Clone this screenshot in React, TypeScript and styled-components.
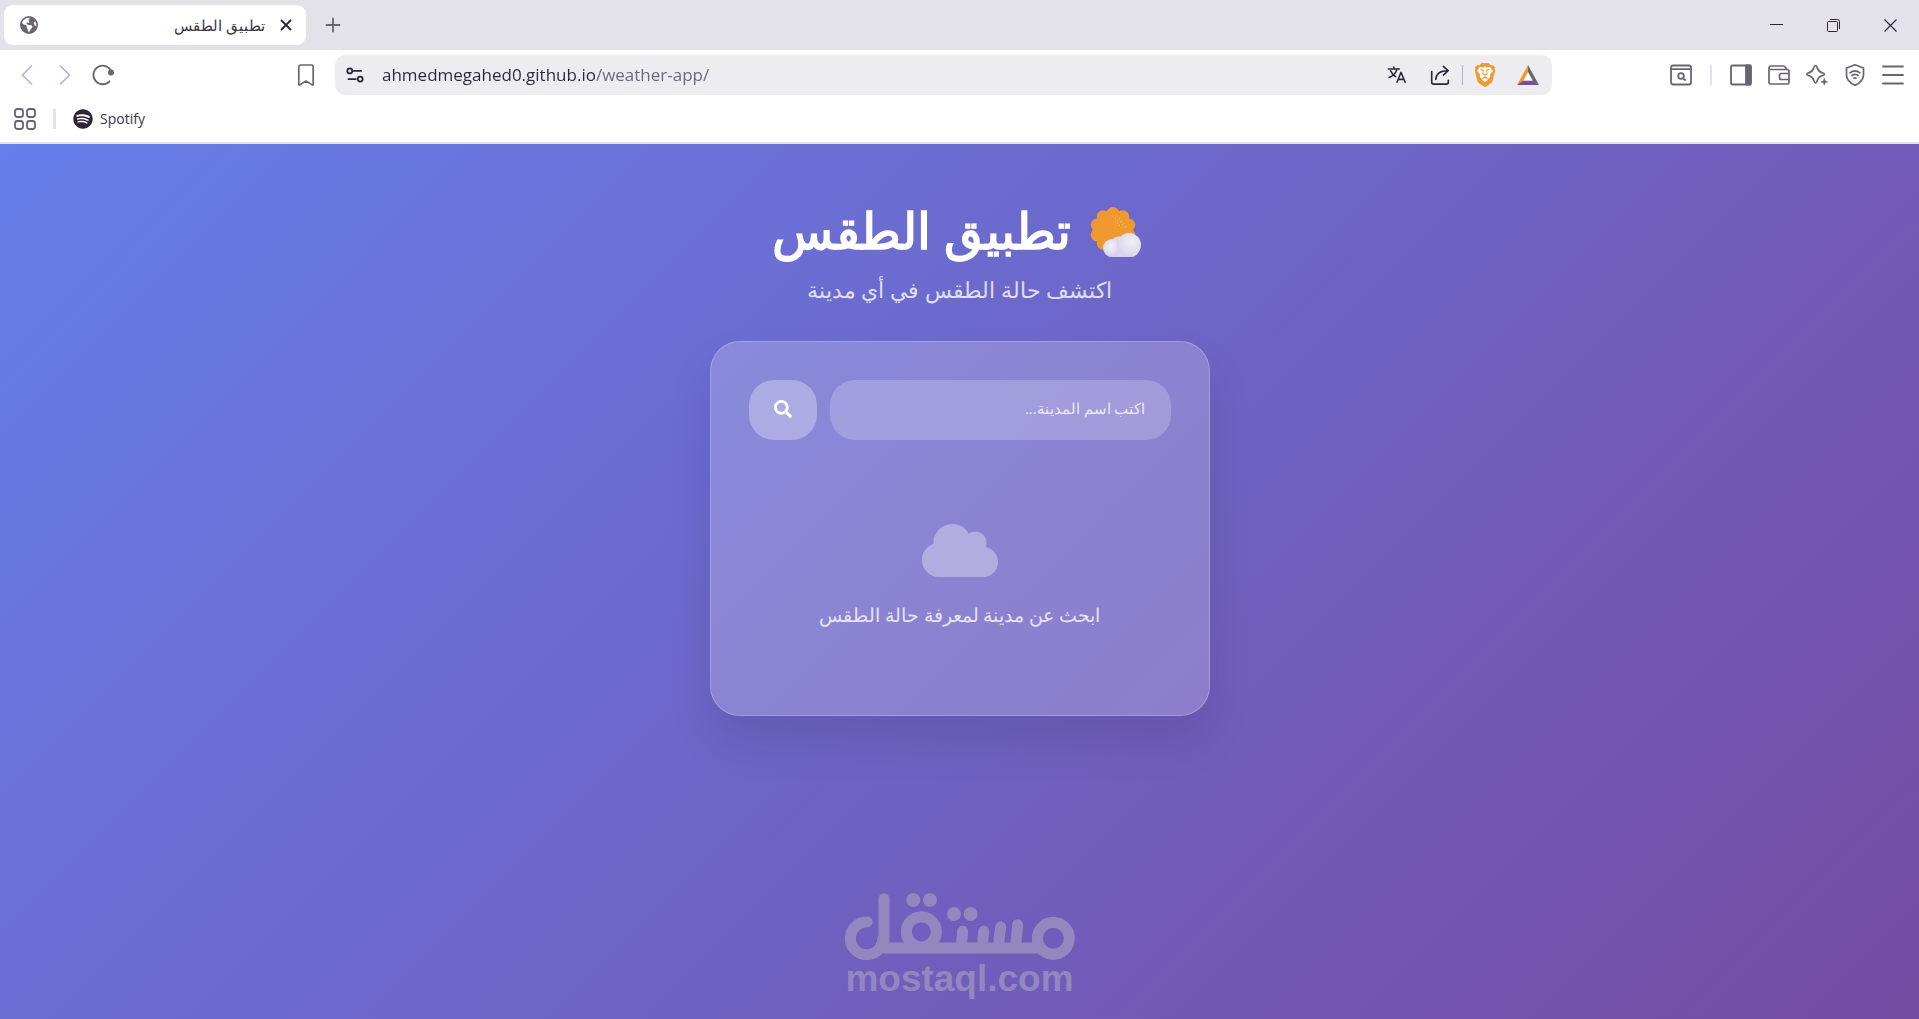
import React from 'react';
import styled, { createGlobalStyle } from 'styled-components';
import { FaCloud, FaSpotify, FaEarthAmericas } from 'react-icons/fa6';
import { FaSearch } from 'react-icons/fa';
import { SiBrave } from 'react-icons/si';

const GlobalStyle = createGlobalStyle`
  *, *::before, *::after { box-sizing: border-box; }
  body { margin: 0; font-family: 'Open Sans', sans-serif; background: #fff; }
  button, input { font-family: inherit; border: 0; outline: 0; }
  svg { display: block; flex: none; }
`;

const Window = styled.div`
  display: flex;
  flex-direction: column;
  min-height: 100vh;
`;

const TabStrip = styled.header`
  display: flex;
  align-items: center;
  height: 50px;
  padding-left: 4px;
  background: #e3e2e8;
  color: #2d2638;
`;

const Tab = styled.div`
  display: flex;
  align-items: center;
  width: 302px;
  height: 40px;
  padding: 0 8px 0 16px;
  border-radius: 9px;
  background: #fff;
  color: #6a6471;
`;

const TabTitle = styled.span`
  flex: 1;
  padding-right: 9px;
  font-size: 15px;
  line-height: 20px;
  color: #3b3644;
`;

const IconButton = styled.button<{ $w?: number; $color?: string }>`
  display: flex;
  align-items: center;
  justify-content: center;
  flex: none;
  width: ${p => p.$w ?? 38}px;
  height: 36px;
  padding: 0;
  background: none;
  color: ${p => p.$color ?? '#6a6471'};
`;

const NewTabSlot = styled.div`
  flex: 1;
  padding-left: 8px;
`;

const Toolbar = styled.div`
  display: grid;
  grid-template-columns: 335px minmax(0, 1fr) 367px;
  align-items: center;
  height: 50px;
`;

const ToolGroup = styled.div<{ $end?: boolean }>`
  display: flex;
  align-items: center;
  padding: ${p => (p.$end ? '0 7px' : '0 10px 0 8px')};
  justify-content: ${p => (p.$end ? 'flex-end' : 'flex-start')};
`;

const Spring = styled.span`
  flex: 1;
`;

const AddressBar = styled.form`
  display: flex;
  align-items: center;
  gap: 1px;
  height: 40px;
  padding-right: 3px;
  border-radius: 10px;
  background: #edecf1;
`;

const AddressInput = styled.input`
  flex: 1;
  min-width: 0;
  height: 30px;
  padding: 0 0 2px 6px;
  font-size: 17px;
  color: transparent;
  background: linear-gradient(90deg, #2d2638 219px, #6a6480 219px);
  background-clip: text;
  -webkit-background-clip: text;
`;

const Divider = styled.span<{ $w: number; $gap?: number; $color?: string }>`
  flex: none;
  width: ${p => p.$w}px;
  height: 20px;
  margin: 0 ${p => p.$gap ?? 0}px;
  background: ${p => p.$color ?? '#e3e2e8'};
`;

const BookmarksBar = styled.nav`
  display: flex;
  align-items: center;
  height: 44px;
  padding: 0 6px 4px;
  border-bottom: 2px solid #e3e2e8;
`;

const BookmarkLink = styled.a`
  display: flex;
  align-items: center;
  gap: 7px;
  padding-left: 8px;
  font-size: 14px;
  line-height: 20px;
  color: #3b3644;
  text-decoration: none;
`;

const Page = styled.main`
  display: flex;
  flex-direction: column;
  align-items: center;
  flex: 1;
  padding: 56px 16px 21px;
  background: linear-gradient(135deg, #667eea 0%, #764ba2 100%);
  color: #fff;
`;

const Title = styled.h1`
  display: flex;
  align-items: center;
  gap: 18px;
  margin: 0;
  font-size: 50px;
  line-height: 60px;
  font-weight: 700;
`;

const Subtitle = styled.p`
  margin: 14px 0 37px;
  font-size: 22px;
  line-height: 30px;
  color: rgba(255, 255, 255, 0.8);
`;

const Card = styled.section`
  width: 100%;
  max-width: 500px;
  padding: 38px;
  border: 1px solid rgba(255, 255, 255, 0.22);
  border-radius: 30px;
  background: rgba(255, 255, 255, 0.2);
  box-shadow: 0 25px 45px rgba(0, 0, 0, 0.1);
`;

const SearchForm = styled.form`
  display: flex;
  gap: 13px;
  height: 60px;
`;

const CityInput = styled.input`
  flex: 1;
  min-width: 0;
  padding: 0 25px 4px;
  border-radius: 25px;
  background: rgba(255, 255, 255, 0.2);
  color: #fff;
  font-size: 15px;
  &::placeholder { color: rgba(255, 255, 255, 0.8); opacity: 1; }
`;

const SearchButton = styled.button`
  display: flex;
  align-items: center;
  justify-content: center;
  width: 68px;
  padding: 0 0 2px;
  border-radius: 25px;
  background: rgba(255, 255, 255, 0.3);
  color: #fff;
`;

const EmptyState = styled.div`
  display: flex;
  flex-direction: column;
  align-items: center;
  gap: 21px;
  padding: 80px 0 49px;
  font-size: 19px;
  line-height: 26px;
  color: rgba(255, 255, 255, 0.8);
  p { margin: 0; }
`;

const CloudIcon = styled(FaCloud)`
  width: 76px;
  height: 61px;
  color: rgba(255, 255, 255, 0.34);
`;

const Brand = styled.footer`
  display: flex;
  flex-direction: column;
  align-items: center;
  margin-top: auto;
  color: #9387bf;
  font: 700 37px/38px 'Liberation Sans', sans-serif;
`;

const Stroke = ({ size = 22, w = 1.6, children }: { size?: number; w?: number; children: React.ReactNode }) => (
  <svg width={size} height={size} viewBox="0 0 22 22" fill="none" stroke="currentColor" strokeWidth={w}
    strokeLinecap="round" strokeLinejoin="round" aria-hidden="true">{children}</svg>
);

const SunCloud = () => {
  const petals = Array.from({ length: 10 }, (_, i) => {
    const a = (i / 10) * Math.PI * 2 - Math.PI / 2;
    return <circle key={i} cx={26 + 16.5 * Math.cos(a)} cy={27 + 16.5 * Math.sin(a)} r="6.5" />;
  });
  return (
    <svg width="58" height="56" viewBox="2 -1 58 56" aria-hidden="true">
      <defs>
        <radialGradient id="puffA" cx="0.45" cy="0.4" r="0.65">
          <stop offset="0" stopColor="#f3f2f5" /><stop offset="1" stopColor="#cfcdea" />
        </radialGradient>
        <radialGradient id="puffB" cx="0.62" cy="0.35" r="0.75">
          <stop offset="0" stopColor="#f1f0f4" /><stop offset="1" stopColor="#d3d0ea" />
        </radialGradient>
      </defs>
      <g fill="#ee9a30">{petals}<circle cx="26" cy="27" r="19" /></g>
      <g fill="#f3c078">
        {[0, 1, 2, 3, 4, 5].map(i => <circle key={i} cx={26 + i * 2.4} cy={13 + i * 2.2} r="0.6" />)}
        {[0, 1, 2, 3, 4].map(i => <circle key={i} cx={30 + i * 2.3} cy={13 + i * 2.6} r="0.6" />)}
        {[0, 1, 2, 3].map(i => <circle key={i} cx={28 + i * 2.3} cy={18 + i * 2.2} r="0.6" />)}
      </g>
      <rect x="17" y="38" width="35" height="16" rx="8" fill="#d6d3ec" />
      <circle cx="32" cy="43" r="9.5" fill="#dcd9ec" />
      <circle cx="25" cy="45" r="9" fill="url(#puffA)" />
      <circle cx="42" cy="42" r="12" fill="url(#puffB)" />
    </svg>
  );
};

const BrandMark = () => (
  <svg width="230" height="67" viewBox="72 70 690 201" fill="none" stroke="currentColor" strokeWidth="33"
    strokeLinecap="round" role="img" aria-label="مستقل">
    <circle cx="697" cy="206" r="48" />
    <line x1="165" y1="235" x2="670" y2="235" strokeLinecap="butt" />
    <line x1="590" y1="165" x2="584" y2="228" />
    <line x1="539" y1="172" x2="532" y2="228" />
    <line x1="488" y1="185" x2="484" y2="228" />
    <line x1="425" y1="185" x2="421" y2="228" />
    <circle cx="301" cy="186" r="45" />
    <line x1="189" y1="87" x2="189" y2="210" />
    <circle cx="137" cy="206" r="49" strokeDasharray="231 77" />
    <g fill="currentColor" stroke="none">
      <circle cx="399" cy="133" r="21" /><circle cx="449" cy="133" r="21" />
      <circle cx="277" cy="91" r="21" /><circle cx="327" cy="91" r="21" />
    </g>
  </svg>
);

export default function App() {
  return (
    <Window>
      <GlobalStyle />
      <TabStrip>
        <Tab>
          <FaEarthAmericas size={18} />
          <TabTitle dir="rtl">تطبيق الطقس</TabTitle>
          <IconButton $w={24} $color="#2d2638" aria-label="Close tab">
            <Stroke w={1.9}><path d="M6.500 6.500l9 9M15.500 6.500l-9 9" /></Stroke>
          </IconButton>
        </Tab>
        <NewTabSlot>
          <IconButton aria-label="New tab"><Stroke w={1.8}><path d="M11 4.500v13M4.500 11h13" /></Stroke></IconButton>
        </NewTabSlot>
        <IconButton $w={57} $color="#2d2638" aria-label="Minimize">
          <svg width="13" height="13" viewBox="0 0 13 13" stroke="currentColor"><path d="M0 5.500h13" /></svg>
        </IconButton>
        <IconButton $w={57} $color="#2d2638" aria-label="Restore">
          <svg width="13" height="13" viewBox="0 0 13 13" fill="none" stroke="currentColor">
            <rect x="0.500" y="2.500" width="10" height="10" rx="1" /><path d="M3 .5h7.500a2 2 0 0 1 2 2V10" />
          </svg>
        </IconButton>
        <IconButton $w={57} $color="#2d2638" aria-label="Close window">
          <svg width="13" height="13" viewBox="0 0 13 13" stroke="currentColor" strokeWidth="1.200"><path d="M.5.5l12 12M12.500.5l-12 12" /></svg>
        </IconButton>
      </TabStrip>

      <Toolbar>
        <ToolGroup>
          <IconButton $color="#b3addb" aria-label="Back"><Stroke><path d="M15.500 2l-9 9 9 9" /></Stroke></IconButton>
          <IconButton $color="#b3addb" aria-label="Forward"><Stroke><path d="M6.500 2l9 9-9 9" /></Stroke></IconButton>
          <IconButton aria-label="Reload">
            <Stroke w={1.8}>
              <path d="M17.500 17.300A9.300 9.300 0 1 1 18.600 6" />
              <circle cx="19" cy="8.500" r="3" fill="currentColor" stroke="none" />
            </Stroke>
          </IconButton>
          <Spring />
          <IconButton aria-label="Bookmark this page">
            <Stroke w={1.7}><path d="M3.800 3a2 2 0 0 1 2-2h10.400a2 2 0 0 1 2 2v17.500c0 .6-.5.8-1 .4L11 17l-6.200 3.900c-.5.4-1 .2-1-.4z" /></Stroke>
          </IconButton>
        </ToolGroup>

        <AddressBar>
          <IconButton type="button" $w={40} $color="#2d2638" aria-label="Site settings">
            <Stroke size={18} w={2.2}>
              <circle cx="4.600" cy="6" r="3" /><path d="M9.500 6h9" />
              <circle cx="17.400" cy="16" r="3" /><path d="M3 16h9" />
            </Stroke>
          </IconButton>
          <AddressInput aria-label="Address" defaultValue="ahmedmegahed0.github.io/weather-app/" />
          <IconButton type="button" $w={42} $color="#2d2638" aria-label="Translate">
            <Stroke size={20} w={1.7}>
              <path d="M1.500 4.500h12M7.500 2.300v2M11 4.500c-1 4-4.500 7.500-8.800 9.300M4 6.500c1.200 2.800 3 4.800 5.500 6.300M11 19l4.400-11 4.600 11M12.500 15.800h6" />
            </Stroke>
          </IconButton>
          <IconButton type="button" $w={42} $color="#2d2638" aria-label="Share">
            <Stroke size={21} w={1.7}>
              <path d="M1.800 7v11a2 2 0 0 0 2 2h13.400a2 2 0 0 0 2-2v-2M6 15c.5-6 5-9 12.500-9M14 1.500L19 6l-5 4.500" />
            </Stroke>
          </IconButton>
          <Divider $w={1} $color="#b3addb" />
          <IconButton type="button" $w={42} $color="#ee9a30" aria-label="Brave Shields">
            <svg width="24" height="24" viewBox="0 0 24 24"><path d="M6 5h12v9l-6 6-6-6z" fill="#fff" /><SiBrave size={24} /></svg>
          </IconButton>
          <IconButton type="button" $w={42} aria-label="Brave Rewards">
            <svg width="22" height="20" viewBox="0 0 22 20">
              <path d="M11 0L0 20l7-4.500L11 8z" fill="#ee9a30" />
              <path d="M11 0v8l4 7.500 7 4.500z" fill="#6a6471" />
              <path d="M0 20h22l-6.500-4.500h-9z" fill="#764ba2" />
              <path d="M11 7l-4.700 8.500h9.400z" fill="#fff" />
            </svg>
          </IconButton>
        </AddressBar>

        <ToolGroup $end>
          <IconButton aria-label="Search tabs">
            <Stroke w={1.8}><rect x="1" y="1.500" width="20" height="19" rx="2" /><path d="M1 5.200h20" /><circle cx="11" cy="12" r="2.800" /><path d="M13.300 14.300l1.700 1.700" /></Stroke>
          </IconButton>
          <Divider $w={2} $gap={10} />
          <IconButton aria-label="Sidebar">
            <Stroke w={1.8}><rect x="1" y="1.500" width="20" height="19" rx="1.500" /><path d="M16 1.500h4.500v19H16z" fill="currentColor" /></Stroke>
          </IconButton>
          <IconButton aria-label="Wallet">
            <Stroke w={1.7}><path d="M18.500 5.500V4.500L16 2H3a2 2 0 0 0-2 2v14.500A1.500 1.500 0 0 0 2.500 20h17a1.500 1.500 0 0 0 1.500-1.500V7.500a2 2 0 0 0-2-2H1.500M21 9.500h-7.500a2 2 0 0 0-2 2v2a2 2 0 0 0 2 2H21" /></Stroke>
          </IconButton>
          <IconButton aria-label="Leo AI">
            <Stroke w={1.7}>
              <path d="M9.500 1.500c1 0 1.300.8 1.700 2.200.9 3 1.800 4 4.600 4.900 1.500.5 2.700.8 2.700 1.600s-.8 1-2.600 1.600c-2.700.9-3.800 2-4.600 4.600-.5 1.600-.8 2.600-1.800 2.600s-1.200-1-1.700-2.600c-.9-2.800-2-3.800-4.600-4.600C1.600 11.300.8 11 .8 10.200s.9-1.100 2.400-1.600c2.800-.9 3.700-2 4.600-4.900.4-1.400.7-2.200 1.700-2.200z" />
              <path d="M18.300 14.500l.8 2.500 2.400.8-2.400.8-.8 2.500-.8-2.500-2.400-.8 2.400-.8z" fill="currentColor" strokeWidth="0.800" />
            </Stroke>
          </IconButton>
          <IconButton aria-label="VPN">
            <Stroke w={1.7}>
              <path d="M11 .8l8.500 3.200v7c0 4.500-3.500 8-8.500 10.300C6 19 2.500 15.500 2.500 11V4z" />
              <path d="M6 8.800c3-2.400 7-2.400 10 0M7.800 11.600c2-1.500 4.400-1.500 6.400 0M10 14.200q1-.6 2 0" />
            </Stroke>
          </IconButton>
          <IconButton aria-label="Menu"><Stroke w={1.8}><path d="M1 2.500h20M1 11h20M1 19.500h20" /></Stroke></IconButton>
        </ToolGroup>
      </Toolbar>

      <BookmarksBar>
        <IconButton aria-label="Apps">
          <Stroke w={1.8}>
            <rect x="1" y="1" width="8" height="8" rx="2.500" /><rect x="13" y="1" width="8" height="8" rx="2.500" />
            <rect x="1" y="13" width="8" height="8" rx="2.500" /><rect x="13" y="13" width="8" height="8" rx="2.500" />
          </Stroke>
        </IconButton>
        <Divider $w={3} $gap={9} />
        <BookmarkLink href="#spotify"><FaSpotify size={20} color="#2d2638" />Spotify</BookmarkLink>
      </BookmarksBar>

      <Page dir="rtl" lang="ar">
        <Title><SunCloud />تطبيق الطقس</Title>
        <Subtitle>اكتشف حالة الطقس في أي مدينة</Subtitle>
        <Card>
          <SearchForm onSubmit={e => e.preventDefault()}>
            <CityInput type="text" aria-label="اسم المدينة" placeholder="اكتب اسم المدينة..." />
            <SearchButton type="submit" aria-label="بحث"><FaSearch size={18} /></SearchButton>
          </SearchForm>
          <EmptyState>
            <CloudIcon />
            <p>ابحث عن مدينة لمعرفة حالة الطقس</p>
          </EmptyState>
        </Card>
        <Brand><BrandMark /><span dir="ltr">mostaql.com</span></Brand>
      </Page>
    </Window>
  );
}
